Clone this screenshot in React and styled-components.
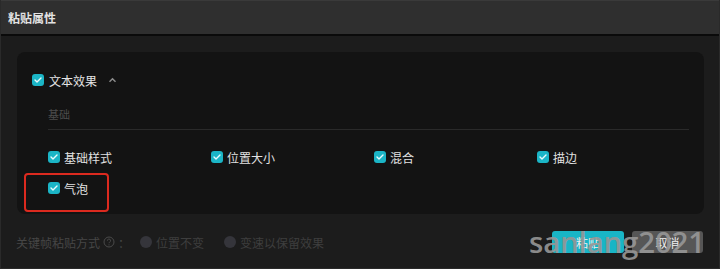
import React from "react";
import styled, { createGlobalStyle } from "styled-components";

const Global = createGlobalStyle`
  html, body { margin: 0; padding: 0; background: #1c1c1c; }
  body { font-family: "Noto Sans CJK SC", "Noto Sans", sans-serif; }
  * { box-sizing: border-box; }
`;

const Window = styled.div`
  position: relative;
  width: 720px;
  height: 269px;
  background: #1c1c1c;
  border-left: 1px solid #2a2a2a;
  border-right: 1px solid #2a2a2a;
  border-bottom: 1px solid #2a2a2a;
  display: flex;
  flex-direction: column;
  overflow: hidden;
`;

const TitleBar = styled.div`
  height: 36px;
  flex: none;
  background: #2f2f2f;
  border-top: 1px solid #3a3a3a;
  border-bottom: 2px solid #0a0a0a;
  display: flex;
  align-items: center;
  padding-left: 7px;
  font-size: 12px;
  font-weight: 700;
  color: #e2e2e2;
`;

const Panel = styled.div`
  margin: 16px 15px 0 16px;
  height: 162px;
  background: #131313;
  border-radius: 8px;
  padding: 18px 15px 0 15px;
  display: flex;
  flex-direction: column;
`;

const Header = styled.div`
  height: 20px;
  display: flex;
  align-items: center;
  gap: 5px;
  font-size: 12px;
  color: #e4e4e4;
`;

const Chevron = styled.svg`
  margin-left: 6px;
  width: 9px;
  height: 6px;
`;

const Section = styled.div`
  margin-left: 16px;
  display: flex;
  flex-direction: column;
`;

const SectionTitle = styled.div`
  margin-top: 16px;
  height: 16px;
  line-height: 16px;
  font-size: 11px;
  color: #4c4c4c;
`;

const Divider = styled.div`
  margin-top: 7px;
  height: 1px;
  background: #2a2a2a;
`;

const Grid = styled.div`
  margin-top: 19px;
  display: grid;
  grid-template-columns: repeat(4, 163px);
  grid-auto-rows: 31px;
`;

const Item = styled.div`
  height: 16px;
  display: flex;
  align-items: center;
  gap: 4px;
  font-size: 12px;
  color: #e2e2e2;
`;

const Highlight = styled.div`
  position: absolute;
  left: 23px;
  top: 173px;
  width: 85px;
  height: 39px;
  border: 2.5px solid #dc2a1f;
  border-radius: 4px;
  pointer-events: none;
`;

const Footer = styled.div`
  flex: 1;
  display: flex;
  align-items: center;
  padding: 0 16px 0 15px;
  margin-top: 2px;
`;

const FooterLabel = styled.div`
  display: flex;
  align-items: center;
  font-size: 12px;
  color: #464646;
  gap: 3px;
`;

const RadioOption = styled.div`
  display: flex;
  align-items: center;
  gap: 4px;
  margin-left: ${(p) => p.$ml}px;
  font-size: 12px;
  color: #3e3e3e;
`;

const RadioDot = styled.span`
  width: 12px;
  height: 12px;
  border-radius: 50%;
  background: #35353b;
`;

const Buttons = styled.div`
  margin-left: auto;
  display: flex;
  gap: 8px;
`;

const Button = styled.div`
  width: ${(p) => p.$w}px;
  height: 22px;
  border-radius: 3px;
  display: flex;
  align-items: center;
  justify-content: center;
  font-size: 12px;
  color: #f0f0f0;
  background: ${(p) => (p.$primary ? "#19b5c6" : "#565656")};
`;

const Watermark = styled.div`
  position: absolute;
  left: 528px;
  top: 224px;
  font-family: "Open Sans", "Liberation Sans", sans-serif;
  font-weight: 600;
  font-size: 29.5px;
  line-height: 36px;
  letter-spacing: -0.2px;
  color: rgba(150, 150, 150, 0.92);
  pointer-events: none;
`;

const Box = styled.span`
  width: 12px;
  height: 12px;
  border-radius: 3px;
  background: #1bb5c6;
  display: inline-flex;
  align-items: center;
  justify-content: center;
  flex: none;
`;

const Check = () => (
  <Box>
    <svg width="8" height="6" viewBox="0 0 8 6">
      <path d="M1 3 L3 5 L7 1" fill="none" stroke="#e8fbfd" strokeWidth="1.4" strokeLinecap="round" strokeLinejoin="round" />
    </svg>
  </Box>
);

const items = ["基础样式", "位置大小", "混合", "描边", "气泡"];

export default function App() {
  return (
    <>
      <Global />
      <Window>
        <TitleBar>粘贴属性</TitleBar>
        <Panel>
          <Header>
            <Check />
            <span>文本效果</span>
            <Chevron viewBox="0 0 9 6">
              <path d="M1.5 4.8 L4.5 1.8 L7.5 4.8" fill="none" stroke="#8a8a8a" strokeWidth="1.5" />
            </Chevron>
          </Header>
          <Section>
            <SectionTitle>基础</SectionTitle>
            <Divider />
            <Grid>
              {items.map((t) => (
                <Item key={t}>
                  <Check />
                  <span>{t}</span>
                </Item>
              ))}
            </Grid>
          </Section>
        </Panel>
        <Footer>
          <FooterLabel>
            <span>关键帧粘贴方式</span>
            <svg width="12" height="12" viewBox="0 0 12 12">
              <circle cx="6" cy="6" r="5" fill="none" stroke="#4a4a4a" strokeWidth="1" />
              <path d="M4.4 4.7 a1.6 1.6 0 1 1 2.3 1.4 c-0.5 0.3 -0.7 0.5 -0.7 1.1" fill="none" stroke="#4a4a4a" strokeWidth="1" />
              <circle cx="6" cy="8.8" r="0.6" fill="#4a4a4a" />
            </svg>
            <span>：</span>
          </FooterLabel>
          <RadioOption $ml={10}>
            <RadioDot />
            <span>位置不变</span>
          </RadioOption>
          <RadioOption $ml={20}>
            <RadioDot />
            <span>变速以保留效果</span>
          </RadioOption>
          <Buttons>
            <Button $primary $w={72}>粘贴</Button>
            <Button $w={71}>取消</Button>
          </Buttons>
        </Footer>
        <Highlight />
        <Watermark>sanlang2021</Watermark>
      </Window>
    </>
  );
}
